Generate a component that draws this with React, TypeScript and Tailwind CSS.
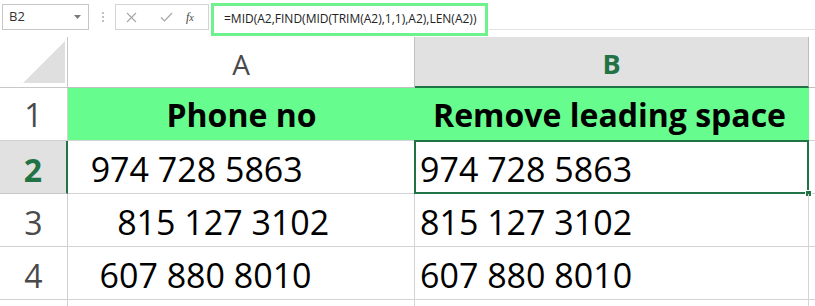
import React from "react";
import clsx from "clsx";

const FONT = "font-['Open_Sans','Liberation_Sans',sans-serif]";
const GRID = "border-[#d4d4d4]";

interface RowData { num: number; a: string; b: string; }

const rows: RowData[] = [
  { num: 2, a: "  974 728 5863", b: "974 728 5863" },
  { num: 3, a: "     815 127 3102", b: "815 127 3102" },
  { num: 4, a: "   607 880 8010", b: "607 880 8010" },
];

function FormulaBar() {
  return (
    <div className="flex h-[37px] items-start">
      {/* name box */}
      <div className="ml-[2px] mt-[4px] flex h-[26px] w-[87px] items-center justify-between border border-[#c6c6c6] pl-[6px] pr-[7px] text-[13px] text-[#333]">
        <span>B2</span>
        <svg width="7" height="4" viewBox="0 0 7 4"><path d="M0 0h7L3.5 4z" fill="#7a7a7a" /></svg>
      </div>
      <div className="ml-[13px] mt-[12px] flex flex-col gap-[2px]">
        <span className="h-[2px] w-[2px] bg-[#c0c0c0]" />
        <span className="h-[2px] w-[2px] bg-[#c0c0c0]" />
        <span className="h-[2px] w-[2px] bg-[#c0c0c0]" />
      </div>
      {/* cancel / enter / fx */}
      <div className="ml-[11px] mt-[4px] flex h-[26px] w-[94px] items-center border border-[#d4d4d4]">
        <svg className="ml-[10px]" width="11" height="11" viewBox="0 0 11 11">
          <path d="M1 1l9 9M10 1l-9 9" stroke="#a6a6a6" strokeWidth="1.1" />
        </svg>
        <svg className="ml-[23px]" width="13" height="10" viewBox="0 0 13 10">
          <path d="M1 5.5l3.5 3.5L12 1" stroke="#a6a6a6" strokeWidth="1.2" fill="none" />
        </svg>
        <span className="ml-[13px] font-['Liberation_Serif',serif] text-[12px] italic text-[#444]">
          f<span className="text-[10px]">x</span>
        </span>
      </div>
      {/* formula input */}
      <div className="relative flex-1 self-stretch">
        <div className="absolute right-0 top-[29px] left-[280px] h-px bg-[#e3e3e3]" />
        <div className="ml-[2px] mt-[3px] flex h-[33px] w-[277px] items-center border-[3px] border-[#6ef28e] pb-[2px] pl-[10px] text-[12px] text-[#222]">
          =MID(A2,FIND(MID(TRIM(A2),1,1),A2),LEN(A2))
        </div>
      </div>
    </div>
  );
}

function HeaderRow() {
  return (
    <div className="flex h-[51px]">
      <div className="relative w-[68px] border-b border-r border-[#c8c8c8]">
        <svg className="absolute left-0 top-0" width="67" height="50" viewBox="0 0 67 50">
          <polygon points="23,46 65,46 65,4" fill="#dfdfdf" />
        </svg>
      </div>
      <div className="flex w-[347px] items-center justify-center border-b border-r border-[#c0c0c0] pt-[4px] text-[28px] text-[#4a4a4a]">
        A
      </div>
      <div className="flex w-[394px] items-center justify-center border-b-2 border-r border-b-[#217346] border-r-[#bdbdbd] bg-[#e1e1e1] pt-[5px] text-[27px] font-bold text-[#217346]">
        B
      </div>
      <div className="flex-1 border-b border-[#c0c0c0]" />
    </div>
  );
}

export default function App() {
  return (
    <div className={clsx("h-[306px] w-[815px] overflow-hidden bg-white", FONT)}>
      <FormulaBar />
      <HeaderRow />

      {/* row 1: green headings */}
      <div className="flex h-[53px]">
        <div className="flex w-[68px] items-center justify-center border-b border-r border-[#d0d0d0] pt-[2px] text-[32px] text-[#4a4a4a]">
          1
        </div>
        <div className="flex w-[741px] border-b border-[#d4d4d4] bg-[#66fd8e] text-[32px] font-bold text-black">
          <div className="flex w-[347px] items-center justify-center pt-[1px]">Phone no</div>
          <div className="flex w-[394px] items-center justify-center pl-[1px] pr-[6px] pt-[1px]">Remove leading space</div>
        </div>
        <div className={clsx("flex-1 border-b", GRID)} />
      </div>

      {rows.map((r) => {
        const sel = r.num === 2;
        return (
          <div key={r.num} className="flex h-[53px]">
            <div
              className={clsx(
                "flex w-[68px] items-center justify-center border-b pt-[5px] text-[32px]",
                sel
                  ? "border-r-2 border-b-[#c8c8c8] border-r-[#217346] bg-[#e1e1e1] font-bold text-[#217346]"
                  : "border-r border-[#d0d0d0] text-[#4a4a4a]"
              )}
            >
              {r.num}
            </div>
            <div className={clsx("flex w-[347px] items-center whitespace-pre border-b border-r pl-[5px] pt-[5px] text-[34px] text-black", GRID)}>
              {r.a}
            </div>
            <div className={clsx("relative flex w-[394px] items-center border-b border-r pl-[5px] pt-[5px] text-[34px] text-black", GRID)}>
              {r.b}
              {sel && (
                <>
                  <div className="absolute -left-[1px] -top-[1px] -right-[1px] -bottom-[1px] border-2 border-[#217346]" />
                  <div className="absolute -bottom-[4px] -right-[4px] h-[7px] w-[7px] border border-white bg-[#217346]" />
                </>
              )}
            </div>
            <div className={clsx("flex-1 border-b", GRID)} />
          </div>
        );
      })}

      <div className="flex h-[20px]">
        <div className="w-[68px] border-r border-[#d0d0d0]" />
        <div className={clsx("w-[347px] border-r", GRID)} />
        <div className={clsx("w-[394px] border-r", GRID)} />
      </div>
    </div>
  );
}
